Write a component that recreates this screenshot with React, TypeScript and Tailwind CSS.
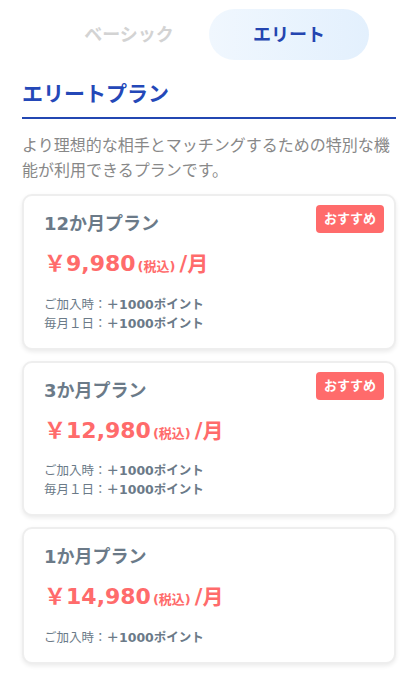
import React, { useState } from 'react';

type Plan = {
  id: string;
  name: string;
  price: string;
  recommended: boolean;
  points: string[];
};

const plans: Plan[] = [
  { id: '12m', name: '12か月プラン', price: '9,980', recommended: true, points: ['ご加入時：', '毎月１日：'] },
  { id: '3m', name: '3か月プラン', price: '12,980', recommended: true, points: ['ご加入時：', '毎月１日：'] },
  { id: '1m', name: '1か月プラン', price: '14,980', recommended: false, points: ['ご加入時：'] },
];

const font = "font-['DejaVu_Sans','Noto_Sans_CJK_JP',sans-serif]";

const App: React.FC = () => {
  const [tab, setTab] = useState<'basic' | 'elite'>('elite');

  return (
    <div className={`min-h-[675px] w-full bg-white px-[22px] pt-[9px] ${font}`}>
      {/* Tabs */}
      <div className="mx-auto flex w-[320px]">
        <button
          onClick={() => setTab('basic')}
          className={`h-[51px] flex-1 rounded-full text-[18px] font-bold ${
            tab === 'basic' ? 'bg-gradient-to-r from-[#f0f7fe] to-[#e3f0fd] text-[#2445b0]' : 'text-[#d3d3d3]'
          }`}
        >
          ベーシック
        </button>
        <button
          onClick={() => setTab('elite')}
          className={`h-[51px] flex-1 rounded-full text-[18px] font-bold ${
            tab === 'elite' ? 'bg-gradient-to-r from-[#f0f7fe] to-[#e3f0fd] text-[#2445b0]' : 'text-[#d3d3d3]'
          }`}
        >
          エリート
        </button>
      </div>

      {/* Heading */}
      <h1 className="mt-[19px] border-b-2 border-[#2347b2] pb-[8px] text-[21px] font-bold leading-[30px] text-[#2448b8]">
        エリートプラン
      </h1>
      <p className="mt-[14px] text-[16px] leading-[25px] text-[#888888]">
        より理想的な相手とマッチングするための特別な機能が利用できるプランです。
      </p>

      {/* Plans */}
      <div className="mt-[11px] flex flex-col gap-[11px] pb-4">
        {plans.map((plan) => (
          <div
            key={plan.id}
            className="relative rounded-[10px] border-2 border-[#eeeeee] bg-white px-[20px] pb-[15px] pt-[14px] shadow-[0_2px_4px_rgba(0,0,0,0.08)]"
          >
            {plan.recommended && (
              <span className="absolute right-[10px] top-[9px] rounded-[4px] bg-[#ff6b6b] px-[8px] py-[4px] text-[13px] font-bold leading-[20px] text-white">
                おすすめ
              </span>
            )}
            <h3 className="text-[18px] font-bold leading-[27px] text-[#6b7a88]">{plan.name}</h3>
            <div className="mt-[11px] flex items-baseline font-bold text-[#ff6b6b]">
              <span className="text-[22px] leading-[32px]">￥{plan.price}</span>
              <span className="ml-[2px] text-[13px]">(税込)</span>
              <span className="ml-[4px] text-[21px]">/月</span>
            </div>
            <div className="mt-[14px] text-[12.5px] leading-[19px] text-[#6b7a88]">
              {plan.points.map((label) => (
                <p key={label}>
                  {label}
                  <span className="font-bold">＋1000ポイント</span>
                </p>
              ))}
            </div>
          </div>
        ))}
      </div>
    </div>
  );
};

export default App;
